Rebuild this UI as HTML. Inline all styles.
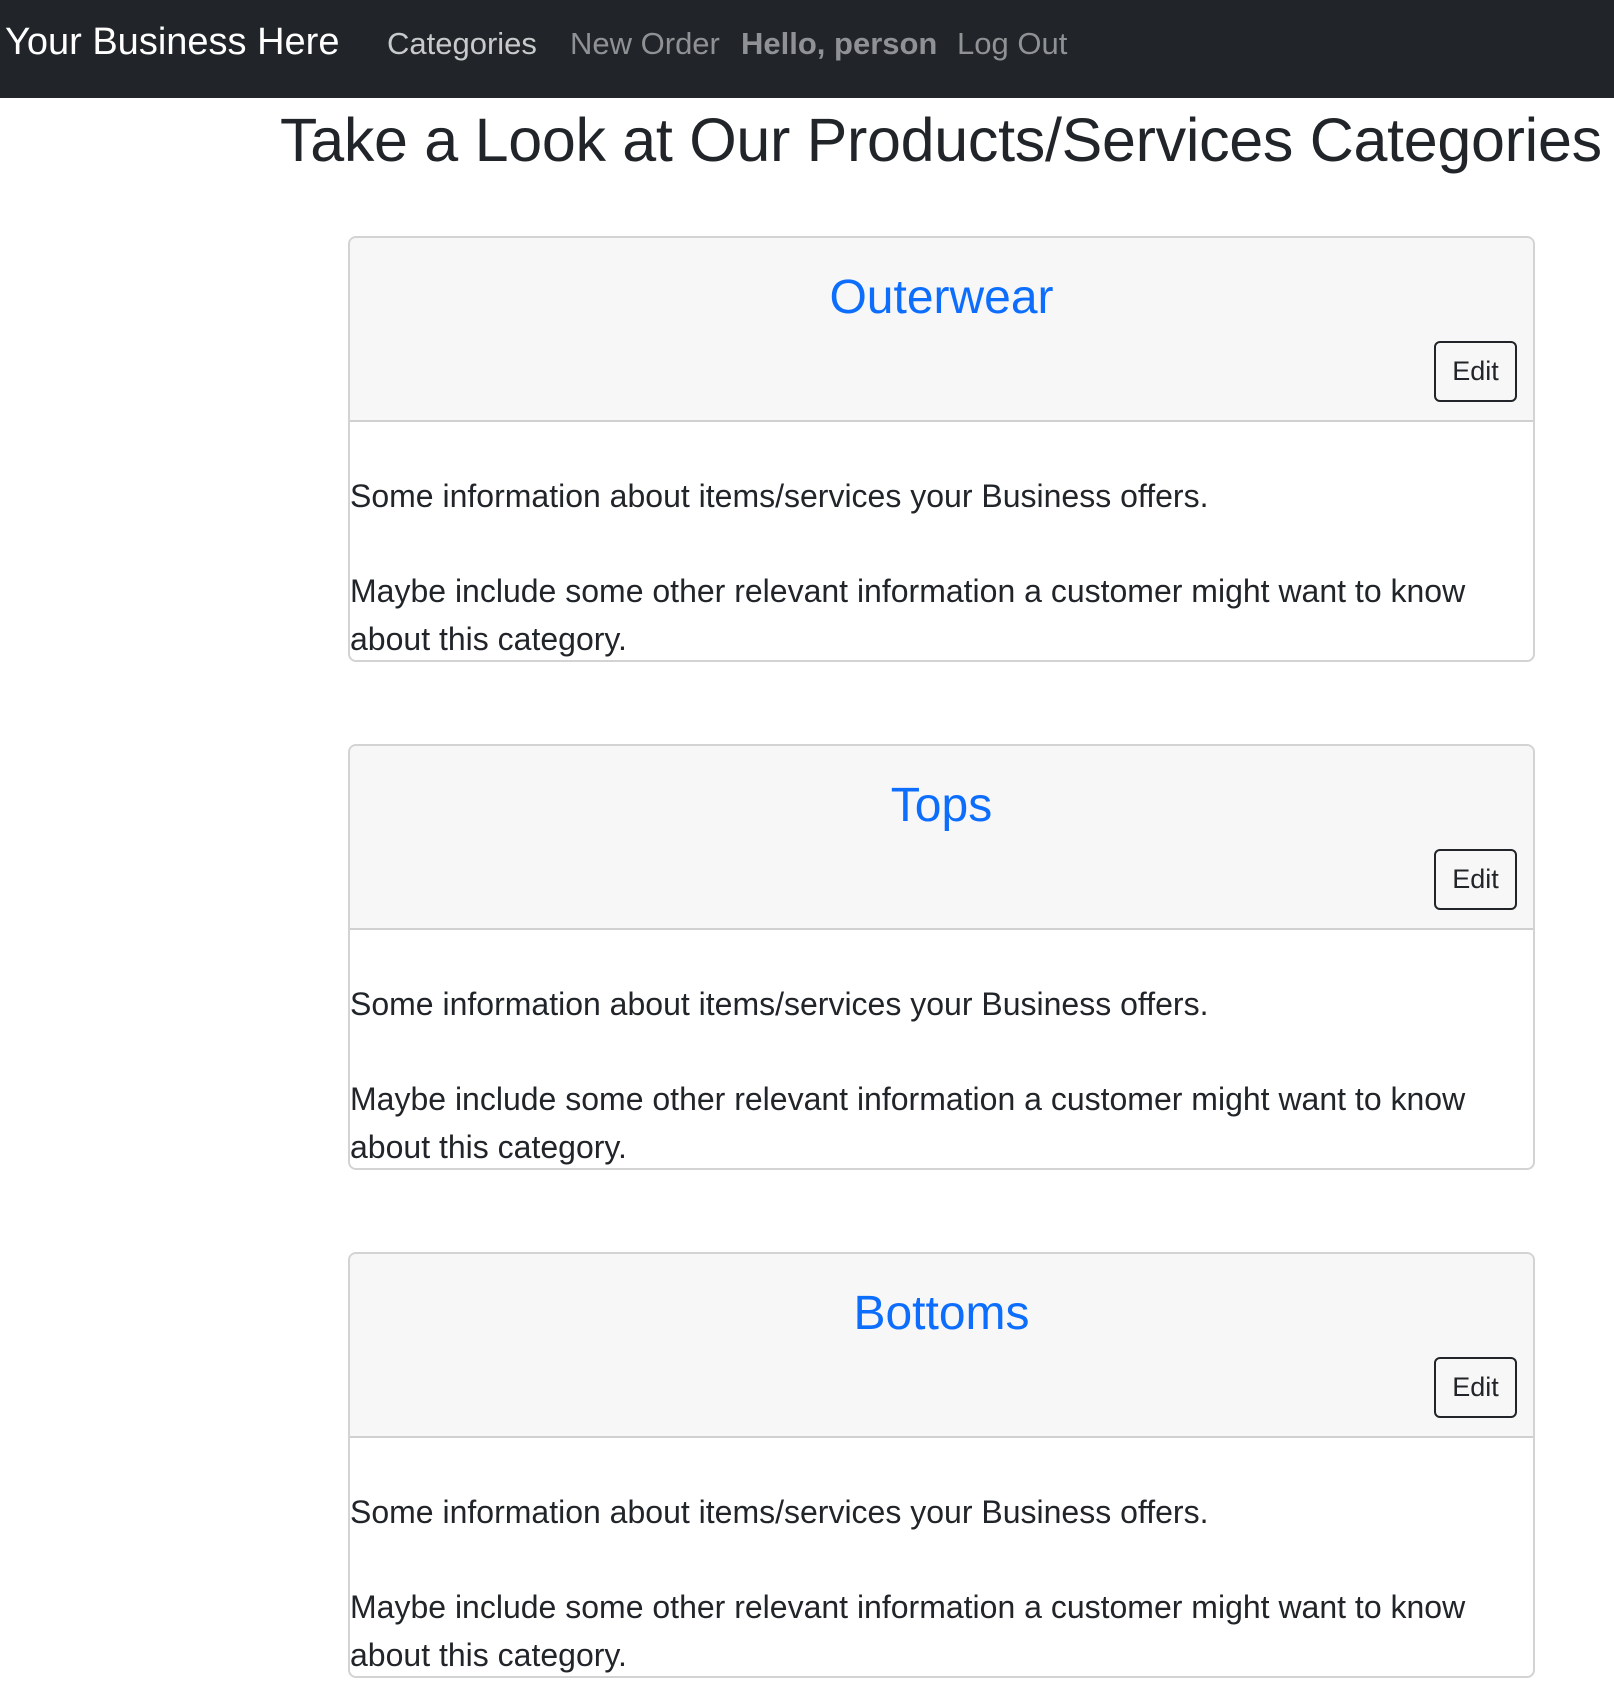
<!DOCTYPE html>
<html><head><meta charset="utf-8"><style>
*{box-sizing:border-box;margin:0;padding:0}
body{width:1614px;height:1707px;background:#fff;font-family:"Liberation Sans",sans-serif;color:#212529;position:relative;overflow:hidden}
.nav{position:absolute;left:0;top:0;width:1614px;height:98px;background:#212529}
.nav span{position:absolute;top:22px;font-size:31px;line-height:44px;white-space:nowrap;color:#8f9194}
h1{position:absolute;left:280px;top:100px;font-size:61px;font-weight:normal;line-height:80px;white-space:nowrap;color:#212529;letter-spacing:-0.3px}
.card{position:absolute;left:348px;width:1187px;height:426px;border:2px solid #d3d3d3;border-radius:8px;overflow:hidden}
.hd{height:184px;background:#f7f7f7;border-bottom:2px solid #d0d0d0;position:relative}
.hd h2{position:absolute;left:0;right:0;top:30px;text-align:center;color:#0d6efd;font-size:48px;font-weight:normal;line-height:60px}
.btn{position:absolute;left:1084px;top:103px;width:83px;height:61px;border:2px solid #212529;border-radius:6px;font-size:27px;line-height:57px;text-align:center;color:#212529}
.bd{font-size:32px;line-height:48px;padding-top:50px;white-space:nowrap}
.bd p{margin-bottom:47px}
</style></head><body>
<div class="nav">
<span style="left:5px;color:#fff;font-size:38px;top:20px">Your Business Here</span>
<span style="left:387px;color:#c8c9ca">Categories</span>
<span style="left:570px">New Order</span>
<span style="left:741px;font-weight:bold">Hello, person</span>
<span style="left:957px">Log Out</span>
</div>
<h1>Take a Look at Our Products/Services Categories</h1>
<div class="card" style="top:236px"><div class="hd"><h2>Outerwear</h2><div class="btn">Edit</div></div><div class="bd"><p>Some information about items/services your Business offers.</p><p>Maybe include some other relevant information a customer might want to know<br>about this category.</p></div></div>
<div class="card" style="top:744px"><div class="hd"><h2>Tops</h2><div class="btn">Edit</div></div><div class="bd"><p>Some information about items/services your Business offers.</p><p>Maybe include some other relevant information a customer might want to know<br>about this category.</p></div></div>
<div class="card" style="top:1252px"><div class="hd"><h2>Bottoms</h2><div class="btn">Edit</div></div><div class="bd"><p>Some information about items/services your Business offers.</p><p>Maybe include some other relevant information a customer might want to know<br>about this category.</p></div></div>
</body></html>
